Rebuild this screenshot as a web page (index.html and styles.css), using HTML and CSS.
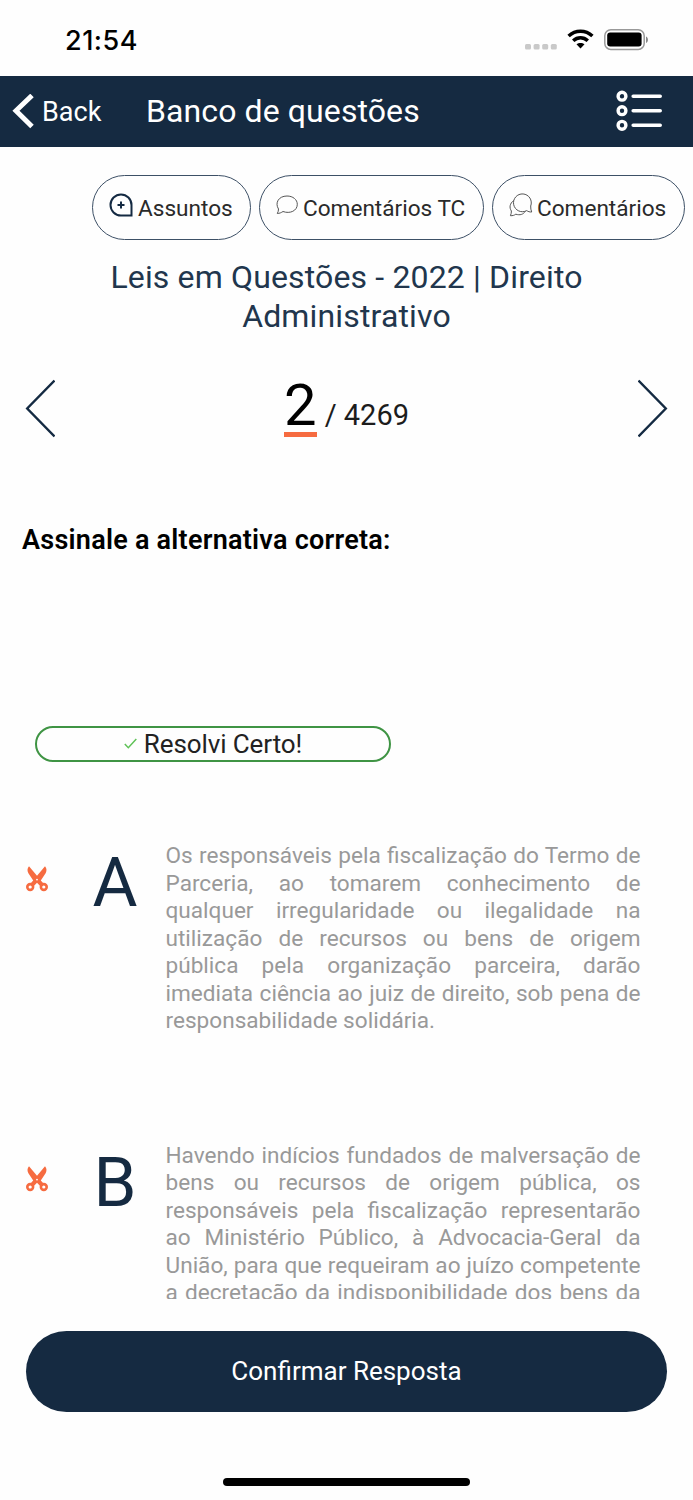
FILE: index.html
```html
<!DOCTYPE html>
<html lang="pt-BR">
<head>
    <meta charset="UTF-8">
    <meta name="viewport" content="width=device-width, initial-scale=1.0">
    <title>Banco de questões</title>
    <link rel="stylesheet" href="styles.css">
</head>
<body>
    <div class="status-bar">
        <span class="clock">21:54</span>
        <div class="status-icons">
            <svg class="signal" width="32" height="6" viewBox="0 0 32 6" fill="#c9c9c9">
                <rect x="0" y="0" width="6" height="5.5" rx="1.5"/>
                <rect x="8.6" y="0" width="6" height="5.5" rx="1.5"/>
                <rect x="17.2" y="0" width="6" height="5.5" rx="1.5"/>
                <rect x="25.8" y="0" width="6" height="5.5" rx="1.5"/>
            </svg>
            <svg class="wifi" width="27" height="20" viewBox="0 0 27 20">
                <path d="M1.6 7C8.4.6 18.6.6 25.4 7M6.2 11.8c4.3-4 10.3-4 14.6 0" fill="none" stroke="#000" stroke-width="3.5"/>
                <path d="M13.5 19.5l-4-4.2c2.3-1.9 5.7-1.9 8 0z" fill="#000"/>
            </svg>
            <svg class="battery" width="45" height="22" viewBox="0 0 45 22">
                <rect x=".8" y=".8" width="39.4" height="19.6" rx="6" fill="#fff" stroke="#999" stroke-width="1.5"/>
                <rect x="3.2" y="3.6" width="34.4" height="14" rx="3" fill="#000"/>
                <path d="M42 7.5c2.6 1 2.6 5.6 0 6.6z" fill="#888"/>
            </svg>
        </div>
    </div>

    <header class="navbar">
        <a class="back">
            <svg width="22" height="36" viewBox="0 0 22 36" fill="none" stroke="#fff" stroke-width="5"><path d="M20 1.5L4 16.8l16 15.7"/></svg>
            <span>Back</span>
        </a>
        <h1>Banco de questões</h1>
        <svg class="list-icon" width="46" height="42" viewBox="0 0 46 42" fill="none" stroke="#fff">
            <g stroke-width="3.4">
                <circle cx="6" cy="6.2" r="3.9"/>
                <circle cx="6" cy="20.7" r="3.9"/>
                <circle cx="6" cy="35.3" r="3.9"/>
            </g>
            <path d="M17.2 6.2h27M17.2 20.7h27M17.2 35.3h27" stroke-width="3.6" stroke-linecap="round"/>
        </svg>
    </header>

    <div class="chips">
        <div class="chip chip-subjects">
            <svg width="24" height="24" viewBox="0 0 24 24" fill="none" stroke="#142a42" stroke-width="2">
                <path d="M12 1.500a10.500 10.500 0 0 0 0 21h10.500V12A10.500 10.500 0 0 0 12 1.500zM12 8.500v7M8.500 12h7"/>
            </svg>
            <span>Assuntos</span>
        </div>
        <div class="chip chip-tc">
            <svg width="22" height="20" viewBox="0 0 22 20" fill="none" stroke="#555" stroke-width="1">
                <path d="M1.300 18.500c.8-1.300 1.200-2.800 1.200-4.500C-1.300 8 2.500 1 11 1c6 0 10.300 3.700 10.300 8.300 0 6.500-7.300 9.800-14.300 7.200-1.800 1.200-3.500 1.900-5.700 2z"/>
            </svg>
            <span>Comentários TC</span>
        </div>
        <div class="chip chip-comments">
            <svg width="24" height="24" viewBox="0 0 24 24" fill="none" stroke="#555" stroke-width="1">
                <circle cx="13.500" cy="9.700" r="8.900" stroke="none"/>
                <path d="M17.700 17.600A8.900 8.900 0 1 1 21.700 13c-.1 2.200.2 4.200 1 6-2 .1-3.600-.4-5-1.400z"/>
                <path d="M4.700 7.500C.8 10.500 0 14.500 2.400 18c0 1.700-.3 3.200-1 4.700 2.200.1 3.900-.4 5.400-1.500 4.200 1.300 7.500.3 9.500-2.900"/>
            </svg>
            <span>Comentários</span>
        </div>
    </div>

    <h2 class="subject">Leis em Questões - 2022 | Direito Administrativo</h2>

    <div class="pager">
        <svg width="30" height="60" viewBox="0 0 30 60" fill="none" stroke="#142a42" stroke-width="2.4"><path d="M29.500 2.500L2.200 30.500l27.300 28"/></svg>
        <div class="counter"><span class="current">2</span><span class="total">/ 4269</span></div>
        <svg width="30" height="60" viewBox="0 0 30 60" fill="none" stroke="#142a42" stroke-width="2.4"><path d="M.5 2.500l27.300 28L.5 58.500"/></svg>
    </div>

    <p class="statement">Assinale a alternativa correta:</p>

    <div class="solved">
        <svg width="13" height="12" viewBox="0 0 13 12" fill="none" stroke="#5fc257" stroke-width="1.5"><path d="M.8 6l3.500 3.700L12.300 1"/></svg>
        <span>Resolvi Certo!</span>
    </div>

    <svg class="sprite" width="0" height="0">
        <symbol id="scissors" viewBox="0 0 22 26">
            <g fill="none" stroke="#f66b40" stroke-width="2.6">
                <circle cx="4.2" cy="21" r="2.900"/>
                <circle cx="17.800" cy="21" r="2.900"/>
            </g>
            <path d="M3 .2C1 2.200 1.200 5 2.400 7.200L7.200 14.500 4 18l3.400 2.500 3.600-3.700 3.600 3.700L18 18l-3.200-3.500 4.800-7.300C20.800 5 21 2.200 19 .2L11 9.800z" fill="#f66b40"/>
            <circle cx="11" cy="13.600" r=".9" fill="#fff"/>
        </symbol>
    </svg>

    <div class="options">
        <div class="option">
            <svg class="cut" width="22" height="26"><use href="#scissors"/></svg>
            <span class="letter">A</span>
            <p>Os responsáveis pela fiscalização do Termo de Parceria, ao tomarem conhecimento de qualquer irregularidade ou ilegalidade na utilização de recursos ou bens de origem pública pela organização parceira, darão imediata ciência ao juiz de direito, sob pena de responsabilidade solidária.</p>
        </div>
        <div class="option">
            <svg class="cut" width="22" height="26"><use href="#scissors"/></svg>
            <span class="letter">B</span>
            <p class="clipped">Havendo indícios fundados de malversação de bens ou recursos de origem pública, os responsáveis pela fiscalização representarão ao Ministério Público, à Advocacia-Geral da União, para que requeiram ao juízo competente a decretação da indisponibilidade dos bens da</p>
        </div>
    </div>

    <button class="confirm">Confirmar Resposta</button>
    <div class="home-indicator"></div>
</body>
</html>
```
FILE: styles.css
```css
* {
    box-sizing: border-box;
}
body {
    margin: 0;
    width: 693px;
    height: 1500px;
    overflow: hidden;
    background: #fefefe;
    font-family: Roboto, sans-serif;
    color: #000;
}
svg {
    display: block;
    flex-shrink: 0;
}
.sprite {
    position: absolute;
}
.status-bar {
    display: flex;
    justify-content: space-between;
    height: 76px;
    padding: 24px 44px 0 65px;
}
.clock {
    font-family: Inter, sans-serif;
    font-size: 27px;
    font-weight: 500;
    line-height: 33px;
    letter-spacing: 0.5px;
}
.status-icons {
    display: flex;
}
.signal {
    margin: 20px 10px 0 0;
}
.wifi {
    margin: 5px 10px 0 0;
}
.battery {
    margin-top: 5px;
}
.navbar {
    display: flex;
    align-items: center;
    height: 71px;
    padding: 0 31px 2px 12px;
    background: #152a41;
    color: #fff;
}
.back {
    display: flex;
    align-items: center;
    gap: 8px;
    width: 134px;
    padding-top: 2px;
    font-size: 27px;
}
.navbar h1 {
    flex: 1;
    margin: 0;
    font-size: 32px;
    font-weight: 400;
    letter-spacing: 0.1px;
}
.chips {
    display: flex;
    gap: 8px;
    height: 65px;
    margin: 28px 0 0 92px;
}
.chip {
    display: flex;
    align-items: center;
    height: 65px;
    border: 1.5px solid #3d5066;
    border-radius: 33px;
    font-size: 22.6px;
    color: #2a2a2a;
    white-space: nowrap;
}
.chip svg {
    margin-bottom: 5px;
}
.chip span {
    padding-top: 2px;
}
.chip-subjects {
    width: 159px;
    padding-left: 16px;
    gap: 5px;
}
.chip-tc {
    width: 225px;
    padding-left: 16px;
    gap: 5px;
}
.chip-comments {
    width: 193px;
    padding-left: 16px;
    gap: 4px;
}
.subject {
    width: 560px;
    margin: 18px auto 0;
    font-size: 32px;
    font-weight: 400;
    line-height: 39px;
    letter-spacing: 0.15px;
    text-align: center;
    color: #21364d;
}
.pager {
    display: flex;
    align-items: center;
    justify-content: space-between;
    height: 64px;
    margin-top: 40px;
    padding: 0 25px;
}
.counter {
    display: flex;
    align-items: baseline;
    gap: 8px;
    margin-top: -1px;
}
.current {
    border-bottom: 5px solid #f66b40;
    font-size: 58px;
    line-height: 54px;
}
.total {
    font-size: 29px;
    color: #1c1c1c;
}
.statement {
    margin: 83px 0 0 22px;
    font-size: 27px;
    font-weight: 600;
    line-height: 34px;
    letter-spacing: 0.25px;
}
.solved {
    display: flex;
    align-items: center;
    justify-content: center;
    gap: 7px;
    width: 356px;
    height: 36px;
    margin: 169px 0 0 35px;
    border: 2px solid #3f9444;
    border-radius: 18px;
    font-size: 26px;
    letter-spacing: -0.1px;
    color: #222;
}
.options {
    height: 458px;
    margin-top: 79px;
    overflow: hidden;
}
.option {
    display: flex;
    align-items: flex-start;
    height: 299.5px;
    padding-left: 26px;
}
.cut {
    margin-top: 25px;
}
.letter {
    width: 134px;
    text-align: center;
    font-size: 69px;
    line-height: 84px;
    color: #152a41;
}
.option p {
    width: 475px;
    margin: 1px 0 0 -16.5px;
    font-size: 22.6px;
    line-height: 27.5px;
    text-align: justify;
    color: #999;
}
.option .clipped {
    text-align-last: justify;
}
.confirm {
    display: block;
    width: 641px;
    height: 81px;
    margin: 32px 0 0 26px;
    padding: 0 0 1px;
    border: none;
    border-radius: 41px;
    background: #152a41;
    color: #fff;
    font-family: inherit;
    font-size: 26px;
}
.home-indicator {
    width: 247px;
    height: 8px;
    margin: 66px auto 0;
    border-radius: 4px;
    background: #000;
}
```
